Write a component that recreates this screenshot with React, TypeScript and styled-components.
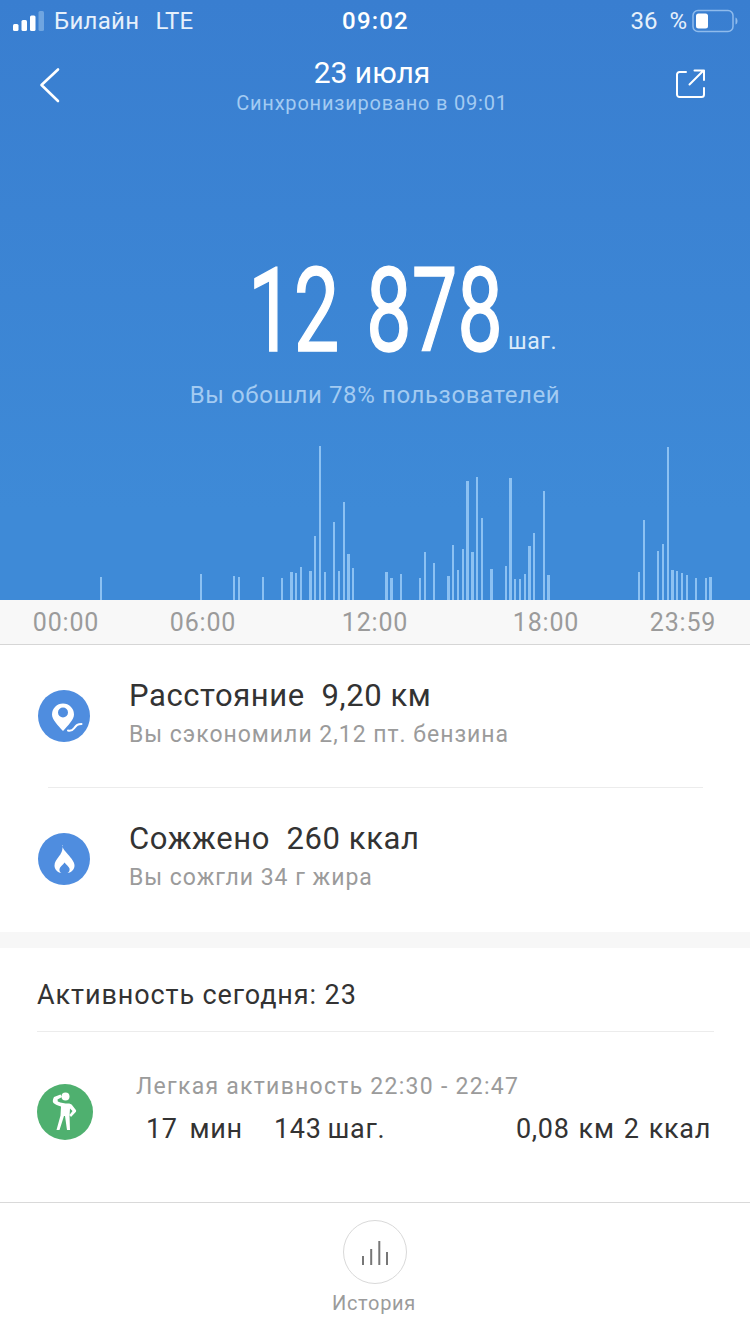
import React from 'react'
import styled, { createGlobalStyle } from 'styled-components'

const Global = createGlobalStyle`
  html, body {
    margin: 0;
    padding: 0;
    background: #fff;
  }
  * { box-sizing: border-box; }
`

const Page = styled.div`
  width: 750px;
  height: 1334px;
  overflow: hidden;
  display: flex;
  flex-direction: column;
  font-family: Roboto, "Noto Sans", sans-serif;
  color: #333;
`

const Hero = styled.div`
  height: 600px;
  flex: none;
  display: flex;
  flex-direction: column;
  background: linear-gradient(180deg, #397ed0 0%, #3e8ad7 85%, #3e8ad7 100%);
  color: #fff;
`

const StatusBar = styled.div`
  height: 42px;
  padding: 0 12px 0 13px;
  display: grid;
  grid-template-columns: 1fr auto 1fr;
  align-items: center;
  font-size: 24px;
`

const StatusLeft = styled.div`
  display: flex;
  align-items: center;
  gap: 9px;
  color: #e6f0fb;
`

const Carrier = styled.span`
  letter-spacing: 0.3px;
  margin-right: 7px;
`

const Clock = styled.div`
  font-weight: 500;
  letter-spacing: 1.2px;
`

const StatusRight = styled.div`
  display: flex;
  align-items: center;
  justify-content: flex-end;
  gap: 5px;
  color: #e6f0fb;
`

const BatteryText = styled.span`
  word-spacing: 6px;
`

const NavBar = styled.div`
  height: 78px;
  padding: 0 44px 0 38px;
  display: grid;
  grid-template-columns: 1fr auto 1fr;
  align-items: start;
`

const BackIcon = styled.svg`
  margin-top: 25px;
`

const ShareIcon = styled.svg`
  justify-self: end;
  margin-top: 27px;
`

const NavTitle = styled.div`
  display: flex;
  flex-direction: column;
  align-items: center;
  padding-top: 13px;
`

const DateText = styled.div`
  font-size: 30px;
  line-height: 36px;
`

const SyncText = styled.div`
  font-size: 20px;
  line-height: 24px;
  letter-spacing: 0.8px;
  color: #a3cbf2;
`

const Summary = styled.div`
  flex: none;
  height: 290px;
  display: flex;
  flex-direction: column;
  align-items: center;
`

const StepsRow = styled.div`
  margin-top: 131px;
  height: 120px;
  width: 309px;
  margin-left: 55px;
  display: flex;
  align-items: flex-end;
`

const StepsValue = styled.div`
  width: 261px;
  flex: none;
  font-size: 116px;
  line-height: 120px;
  font-weight: 400;
  word-spacing: 9.5px;
  white-space: nowrap;
  transform: scaleX(0.7);
  transform-origin: left bottom;
  -webkit-text-stroke: 1.5px #fff;
`

const StepsUnit = styled.div`
  font-size: 23px;
  line-height: 30px;
  margin-bottom: 14px;
  margin-left: -1px;
  letter-spacing: 0.6px;
  color: #dcebfa;
`

const Rank = styled.div`
  margin-top: 9px;
  font-size: 24px;
  line-height: 30px;
  letter-spacing: 0.6px;
  color: #a3cbf2;
`

const Chart = styled.svg`
  display: block;
  flex: none;
`

const Axis = styled.div`
  height: 45px;
  flex: none;
  display: grid;
  grid-template-columns: 132px 142px 202px 140px 134px;
  align-items: center;
  background: #f8f8f8;
  border-bottom: 1px solid #d6d6d6;
`

const AxisLabel = styled.span`
  font-size: 25px;
  letter-spacing: 0.8px;
  text-align: center;
  color: #9b9b9b;
`

const Stats = styled.div`
  height: 287px;
  flex: none;
  display: flex;
  flex-direction: column;
`

const StatRow = styled.div`
  height: 142px;
  padding-left: 38px;
  display: flex;
  align-items: center;
  gap: 39px;
`

const Divider = styled.div`
  height: 1px;
  margin: 0 47px 0 48px;
  background: #ececec;
`

const IconCircle = styled.div<{ $bg: string; $size: number }>`
  width: ${p => p.$size}px;
  height: ${p => p.$size}px;
  flex: none;
  border-radius: 50%;
  background: ${p => p.$bg};
`

const StatBody = styled.div`
  display: flex;
  flex-direction: column;
  gap: 6px;
  padding-bottom: 4px;
`

const StatTitle = styled.div`
  font-size: 31px;
  line-height: 36px;
  letter-spacing: 0.6px;
  white-space: pre;
`

const StatNote = styled.div`
  font-size: 23px;
  line-height: 30px;
  letter-spacing: 0.98px;
  color: #9b9b9b;
`

const Band = styled.div`
  height: 16px;
  flex: none;
  background: #f7f7f7;
`

const Activity = styled.div`
  flex: 1;
  padding: 0 36px 0 37px;
  display: flex;
  flex-direction: column;
`

const ActivityTitle = styled.div`
  height: 84px;
  flex: none;
  padding-top: 10px;
  display: flex;
  align-items: center;
  font-size: 27px;
  letter-spacing: 0.9px;
  border-bottom: 1px solid #ececec;
`

const ActivityRow = styled.div`
  padding-top: 40px;
  display: flex;
  gap: 43px;
  align-items: flex-start;
`

const ActivityIconWrap = styled.div`
  margin-top: 12px;
`

const ActivityBody = styled.div`
  flex: 1;
  display: flex;
  flex-direction: column;
`

const ActivityName = styled.div`
  font-size: 23px;
  line-height: 30px;
  letter-spacing: 1.27px;
  color: #9b9b9b;
`

const ActivityValues = styled.div`
  margin-top: 10px;
  padding: 0 3px 0 10px;
  display: flex;
  font-size: 27px;
  line-height: 34px;
  letter-spacing: 0.7px;
  word-spacing: -1.5px;
`

const ActivityValue = styled.span<{ $width?: number }>`
  flex: none;
  width: ${p => (p.$width ? `${p.$width}px` : 'auto')};
  white-space: pre;
`

const ValueEnd = styled.span`
  margin-left: auto;
  white-space: pre;
  word-spacing: 1.7px;
`

const Footer = styled.div`
  height: 132px;
  flex: none;
  padding-top: 17px;
  display: flex;
  flex-direction: column;
  align-items: center;
  border-top: 1px solid #d9d9d9;
`

const HistoryCircle = styled.div`
  width: 64px;
  height: 64px;
  border-radius: 50%;
  border: 1px solid #d9d9d9;
  display: flex;
  align-items: center;
  justify-content: center;
`

const HistoryLabel = styled.div`
  margin-top: 6px;
  margin-left: -2px;
  font-size: 20px;
  line-height: 26px;
  letter-spacing: 0.7px;
  color: #9b9b9b;
`

// [x, top, width] measured from the baseline at y=600
const bars: [number, number, number][] = [
  [101, 577, 2], [201, 574, 2], [234, 576, 2], [239, 577, 2], [263, 577, 2],
  [282, 578, 2], [291.5, 572, 3], [296, 573, 2], [301, 567, 2], [310.5, 571, 3],
  [315, 536, 2], [320, 446, 2], [325, 572, 2], [334, 522, 2], [339, 571, 2],
  [344, 502, 2], [348.5, 554, 3], [353, 568, 2],
  [386.5, 572, 3], [391.5, 578, 3], [401, 574, 2], [420, 578, 2], [425, 552, 2],
  [434, 563, 2], [448.5, 576, 3], [453, 545, 2], [458, 570, 2], [463, 549, 2],
  [467.5, 481, 3], [472.5, 552, 3], [477, 477, 2], [482, 518, 2], [491.5, 569, 3],
  [506, 566, 2], [510.5, 478, 3], [515, 579, 2], [520, 579, 2], [525, 574, 2],
  [529.5, 546, 3], [534, 533, 2], [544, 491, 2], [548.5, 575, 3],
  [639, 572, 2], [644, 520, 2], [658, 551, 2], [663, 544, 2], [668, 447, 2],
  [672.5, 570, 3], [677, 571, 2], [682, 573, 2], [687, 575, 2], [696, 578, 2],
  [706, 578, 2], [710.5, 577, 3],
]

const PinIcon = () => (
  <svg width="52" height="52" viewBox="0 0 52 52" fill="none" display="block">
    <path
      fillRule="evenodd"
      d="M25 13.500a11 11 0 0 1 11 11c0 5-6 11-11 16.500-5-5.500-11-11.500-11-16.500a11 11 0 0 1 11-11zm0 4a5 5 0 1 0 0 10 5 5 0 0 0 0-10z"
      fill="#fff"
    />
    <path d="M30 40.500c2.500 .8 4.500-.2 6.500-2.700s3-3.800 7-3.800" stroke="#fff" strokeWidth="2" strokeLinecap="round" />
  </svg>
)

const FlameIcon = () => (
  <svg width="52" height="52" viewBox="0 0 52 52" display="block">
    <path
      d="M24 12c.8 4 3 6 6 9.500 3 3.500 6.500 7.500 6.500 11 0 4-3 7-7 7.500 1.500-1 2.500-2.500 2-4.500-.5-1.800-3-3.200-5-6-1.500 2.800-4.500 4-5 6.500-.3 2 .5 3.500 2 4-4-.5-7-3.500-7-7.500 0-3.500 2-6 4-8.500 2.500-3 4.500-6.500 4-12z"
      fill="#fff"
    />
  </svg>
)

const FigureIcon = () => (
  <svg width="56" height="56" viewBox="0 0 56 56" fill="none" display="block">
    <circle cx="28.500" cy="12.500" r="4" fill="#fff" />
    <path
      d="M17 13 23.500 10.500 25 13 20.500 15.500 20.800 17.500C24 19 28 19.500 31 19.500 33 19.500 34 20 35 21L38.500 25.500C39.500 26.500 39.300 27.500 38.500 28.300L34 33 32.500 31 35.500 27 33 24.500 32.500 32 33 46H30L28 32H27L22.500 46H19.500L23.500 31.500 24 22.500C21 21.500 18 20.500 16.500 19 15.500 18 15.500 16 17 13Z"
      fill="#fff"
    />
  </svg>
)

const App: React.FC = () => {
  return (
    <Page>
      <Global />
      <Hero>
        <StatusBar>
          <StatusLeft>
            <svg width="32" height="20" viewBox="0 0 32 20">
              <rect x="0" y="13" width="5.500" height="7" rx="1.500" fill="#fff" />
              <rect x="8.500" y="9" width="5.500" height="11" rx="1.500" fill="#fff" />
              <rect x="17" y="4.500" width="5.500" height="15.500" rx="1.500" fill="#fff" />
              <rect x="25.500" y="0" width="5.500" height="20" rx="1.500" fill="#6fa5e0" />
            </svg>
            <Carrier>Билайн</Carrier>
            <span>LTE</span>
          </StatusLeft>
          <Clock>09:02</Clock>
          <StatusRight>
            <BatteryText>36 %</BatteryText>
            <svg width="46" height="24" viewBox="0 0 46 24" fill="none">
              <rect x="1" y="1.500" width="40" height="21" rx="5" stroke="#8fbbec" strokeWidth="1.500" />
              <rect x="4" y="4.500" width="12" height="15" rx="2.500" fill="#fff" />
              <path d="M43.500 8.500c1.500.5 2 2 2 3.500s-.5 3-2 3.500z" fill="#8fbbec" />
            </svg>
          </StatusRight>
        </StatusBar>
        <NavBar>
          <BackIcon width="24" height="36" viewBox="0 0 24 36" fill="none">
            <path d="M20 2.500 3.500 18 20 34" stroke="#fff" strokeWidth="2.600" strokeLinecap="round" strokeLinejoin="round" />
          </BackIcon>
          <NavTitle>
            <DateText>23 июля</DateText>
            <SyncText>Синхронизировано в 09:01</SyncText>
          </NavTitle>
          <ShareIcon width="30" height="29" viewBox="0 0 30 29" fill="none">
            <path d="M10 3H3.500A2.500 2.500 0 0 0 1 5.500v20A2.500 2.500 0 0 0 3.500 28h22a2.500 2.500 0 0 0 2.500-2.500V19" stroke="#fff" strokeWidth="2" strokeLinecap="round" />
            <path d="M13.500 15.500 27 2M18.500 1.500H28V11" stroke="#fff" strokeWidth="2" strokeLinecap="round" strokeLinejoin="round" />
          </ShareIcon>
        </NavBar>
        <Summary>
          <StepsRow>
            <StepsValue>12 878</StepsValue>
            <StepsUnit>шаг.</StepsUnit>
          </StepsRow>
          <Rank>Вы обошли 78% пользователей</Rank>
        </Summary>
        <Chart width="750" height="190" viewBox="0 410 750 190">
          {bars.map(([x, top, w]) => (
            <rect key={x} x={x - w / 2} y={top} width={w} height={600 - top} fill="#8cc1f2" />
          ))}
        </Chart>
      </Hero>
      <Axis>
        <AxisLabel>00:00</AxisLabel>
        <AxisLabel>06:00</AxisLabel>
        <AxisLabel>12:00</AxisLabel>
        <AxisLabel>18:00</AxisLabel>
        <AxisLabel>23:59</AxisLabel>
      </Axis>
      <Stats>
        <StatRow>
          <IconCircle $bg="#4f8ddf" $size={52}>
            <PinIcon />
          </IconCircle>
          <StatBody>
            <StatTitle>{'Расстояние  9,20 км'}</StatTitle>
            <StatNote>Вы сэкономили 2,12 пт. бензина</StatNote>
          </StatBody>
        </StatRow>
        <Divider />
        <StatRow>
          <IconCircle $bg="#4f8ddf" $size={52}>
            <FlameIcon />
          </IconCircle>
          <StatBody>
            <StatTitle>{'Сожжено  260 ккал'}</StatTitle>
            <StatNote>Вы сожгли 34 г жира</StatNote>
          </StatBody>
        </StatRow>
      </Stats>
      <Band />
      <Activity>
        <ActivityTitle>Активность сегодня: 23</ActivityTitle>
        <ActivityRow>
          <ActivityIconWrap>
            <IconCircle $bg="#4fb06f" $size={56}>
              <FigureIcon />
            </IconCircle>
          </ActivityIconWrap>
          <ActivityBody>
            <ActivityName>Легкая активность 22:30 - 22:47</ActivityName>
            <ActivityValues>
              <ActivityValue $width={128}>{'17  мин'}</ActivityValue>
              <ActivityValue>143 шаг.</ActivityValue>
              <ValueEnd>0,08 км 2 ккал</ValueEnd>
            </ActivityValues>
          </ActivityBody>
        </ActivityRow>
      </Activity>
      <Footer>
        <HistoryCircle>
          <svg width="30" height="26" viewBox="0 0 30 26">
            <rect x="2" y="17" width="2" height="9" fill="#777" />
            <rect x="10.200" y="10" width="2" height="16" fill="#777" />
            <rect x="18.300" y="2" width="2" height="24" fill="#777" />
            <rect x="26" y="13" width="2" height="13" fill="#777" />
          </svg>
        </HistoryCircle>
        <HistoryLabel>История</HistoryLabel>
      </Footer>
    </Page>
  )
}

export default App
